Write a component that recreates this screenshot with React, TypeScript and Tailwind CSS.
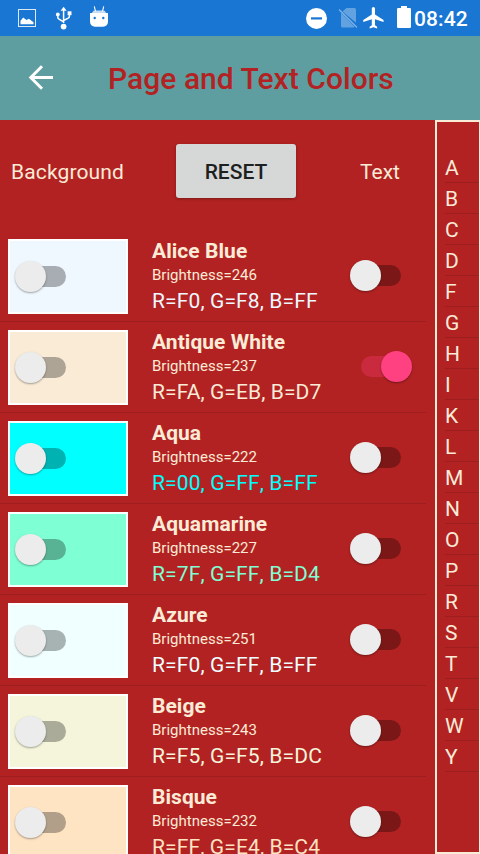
import React from "react";

type ColorRow = { name: string; brightness: number; rgb: string; hex: string; on?: boolean; kern?: boolean };

const colors: ColorRow[] = [
  { name: "Alice Blue", brightness: 246, rgb: "R=F0, G=F8, B=FF", hex: "#F0F8FF" },
  { name: "Antique White", brightness: 237, rgb: "R=FA, G=EB, B=D7", hex: "#FAEBD7", on: true, kern: true },
  { name: "Aqua", brightness: 222, rgb: "R=00, G=FF, B=FF", hex: "#00FFFF" },
  { name: "Aquamarine", brightness: 227, rgb: "R=7F, G=FF, B=D4", hex: "#7FFFD4" },
  { name: "Azure", brightness: 251, rgb: "R=F0, G=FF, B=FF", hex: "#F0FFFF" },
  { name: "Beige", brightness: 243, rgb: "R=F5, G=F5, B=DC", hex: "#F5F5DC" },
  { name: "Bisque", brightness: 232, rgb: "R=FF, G=E4, B=C4", hex: "#FFE4C4" },
];

const letters = "ABCDFGHIKLMNOPRSTVWY".split("");

function Toggle({ on }: { on?: boolean }) {
  return (
    <div className={`relative h-[21px] w-10 rounded-full ${on ? "bg-[#ff4081]/30" : "bg-black/30"}`}>
      <div
        className={`absolute -top-[5px] size-[31px] rounded-full shadow-[0_1px_2px_rgba(0,0,0,0.35)] ${
          on ? "left-5 bg-[#ff4081]" : "-left-[11px] bg-[#ececec]"
        }`}
      />
    </div>
  );
}

function StatusBar() {
  return (
    <div className="flex h-9 shrink-0 bg-[#1976d2] text-white">
      <svg height="36" className="w-[414px] shrink-0" viewBox="0 0 414 36" fill="currentColor">
        <rect x="18.5" y="9.5" width="17" height="17" fill="none" stroke="currentColor" strokeOpacity="0.85" />
        <path d="M20.5 24.2v-3.500l2.700-3.200 3.300 2.500 2.400-1.200 4.600 3.400v2z" />
        <path
          d="M63.600 10v13M57.800 15v2.200q0 1.300 1.200 1.900l4.600 2.800M69.400 13.500v2.700q0 1.300-1.200 1.900l-4.600 2.400"
          fill="none"
          stroke="currentColor"
          strokeWidth="1.500"
        />
        <path d="M63.600 6.700l3 4h-6z" />
        <circle cx="57.800" cy="14.400" r="1.900" />
        <rect x="67.600" y="11.300" width="3.900" height="3.900" />
        <circle cx="63.600" cy="26.600" r="2.900" />
        <path d="M90 13h18v8.500c0 3.300-2 5-5 5.200h-8c-3-.2-5-1.900-5-5.200z" />
        <path d="M92 13c.5-1.700 1.500-2.500 3-2.500h8c1.500 0 2.500.8 3 2.500z" fillOpacity="0.75" />
        <path d="M94.300 6.300l1.200 5M103.700 6.300l-1.200 5" stroke="currentColor" strokeWidth="1.100" />
        <circle cx="94.700" cy="18" r="1.200" fill="#1976d2" />
        <circle cx="103.300" cy="18" r="1.200" fill="#1976d2" />
        <circle cx="316.500" cy="18.400" r="10.500" />
        <rect x="311" y="17.300" width="11" height="2.200" fill="#1976d2" />
        <g fillOpacity="0.32">
          <path d="M346.500 8h8q1.500 0 1.500 1.500v13.300L342.500 11.500z" />
          <path d="M341 12.700l13.600 14.100q-.4.700-1.400.7h-10.700q-1.500 0-1.500-1.500z" />
        </g>
        <path d="M339 9.500l18 18" stroke="currentColor" strokeOpacity="0.450" strokeWidth="1.300" />
        <path transform="translate(361.100 4.900) scale(1.070)" d="M21 16v-2l-8-5V3.500c0-.830-.670-1.500-1.500-1.500S10 2.670 10 3.500V9l-8 5v2l8-2.500V19l-2 1.500V22l3.500-1 3.500 1v-1.500L13 19v-5.500l8 2.500z" />
        <path d="M401 6h6v2h2.700q1.300 0 1.300 1.300v17.400q0 1.300-1.300 1.300h-11.400q-1.300 0-1.300-1.300V9.300q0-1.300 1.300-1.300H401z" />
      </svg>
      <span className="pt-px text-[21px] leading-9 font-medium tracking-[0.1px]">08:42</span>
    </div>
  );
}

export default function App() {
  return (
    <div className="flex h-[854px] w-[480px] flex-col overflow-hidden bg-[#b22222] font-['Roboto',sans-serif] text-[#faebd7]">
      <StatusBar />
      <header className="flex h-[84px] shrink-0 items-center bg-[#5f9ea0] pl-[28px]">
        <svg width="26" height="26" viewBox="0 0 26 26" fill="none" stroke="white" strokeWidth="3" className="mr-[54px] mb-px shrink-0">
          <path d="M25 12.500H3.500M14 1.300L2.800 12.500l11.200 11.200" />
        </svg>
        <h1 className="pt-0.5 text-[30px] leading-[40px] font-medium tracking-[0.040px] text-[#b22222]">Page and Text Colors</h1>
      </header>
      <div className="flex min-h-0 flex-1">
        <main className="flex w-[435px] shrink-0 flex-col overflow-hidden">
          <div className="flex h-[111px] shrink-0 pt-6 text-[21px] leading-[56px]">
            <span className="w-[176px] pl-[11px] tracking-[0.130px]">Background</span>
            <button className="h-[54px] w-[120px] rounded-[3px] bg-[#d6d7d7] font-medium text-[#1e1f1f] shadow-[0_1px_3px_rgba(0,0,0,0.3)]">
              <span className="block pt-0.5 leading-[52px]">RESET</span>
            </button>
            <span className="pl-16">Text</span>
          </div>
          {colors.map((c) => (
            <div key={c.name} className="flex h-[91px] w-[426px] shrink-0 border-b border-[#9c1e1e] pl-2">
              <div
                className="mt-2 h-[75px] w-[120px] shrink-0 border-2 border-white pt-[25px] pl-4"
                style={{ backgroundColor: c.hex }}
              >
                <Toggle />
              </div>
              <div className="w-[233px] shrink-0 pt-[7px] pl-6 whitespace-nowrap">
                <div className="text-[21px] leading-[26px] font-bold tracking-[0.050px]">{c.name}</div>
                <div className="text-[15px] leading-[22px]">Brightness={c.brightness}</div>
                <div
                  className={`text-[21px] leading-[30px] ${c.kern ? "tracking-[0.100px]" : "tracking-[0.130px] [font-kerning:none]"}`}
                  style={{ color: c.hex }}
                >
                  {c.rgb}
                </div>
              </div>
              <div className="pt-[34px]">
                <Toggle on={c.on} />
              </div>
            </div>
          ))}
        </main>
        <nav className="flex w-[45px] shrink-0 flex-col border-2 border-r border-[#faebd7] pt-[30px] pl-2">
          {letters.map((l) => (
            <div key={l} className="h-[31px] border-b border-[#9c1e1e] text-[21px] leading-[33px]">
              {l}
            </div>
          ))}
        </nav>
      </div>
    </div>
  );
}
